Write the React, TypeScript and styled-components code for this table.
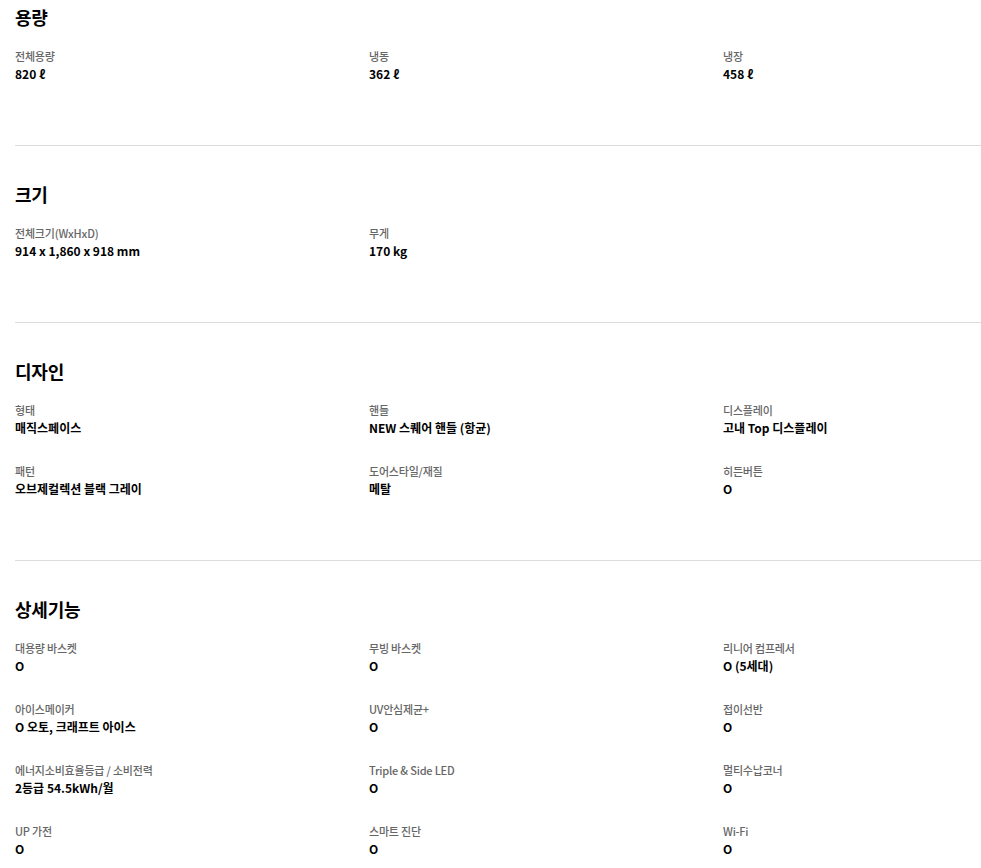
import React from 'react';
import styled, { createGlobalStyle } from 'styled-components';

const GlobalStyle = createGlobalStyle`
  body {
    margin: 0;
    background: #fff;
    font-family: "Noto Sans CJK KR", "Noto Sans", sans-serif;
    color: #000;
  }
`;

interface Spec {
  label: string;
  value: string;
}

interface SpecGroup {
  title: string;
  items: Spec[];
}

const groups: SpecGroup[] = [
  {
    title: '용량',
    items: [
      { label: '전체용량', value: '820 ℓ' },
      { label: '냉동', value: '362 ℓ' },
      { label: '냉장', value: '458 ℓ' },
    ],
  },
  {
    title: '크기',
    items: [
      { label: '전체크기(WxHxD)', value: '914 x 1,860 x 918 mm' },
      { label: '무게', value: '170 kg' },
    ],
  },
  {
    title: '디자인',
    items: [
      { label: '형태', value: '매직스페이스' },
      { label: '핸들', value: 'NEW 스퀘어 핸들 (항균)' },
      { label: '디스플레이', value: '고내 Top 디스플레이' },
      { label: '패턴', value: '오브제컬렉션 블랙 그레이' },
      { label: '도어스타일/재질', value: '메탈' },
      { label: '히든버튼', value: 'O' },
    ],
  },
  {
    title: '상세기능',
    items: [
      { label: '대용량 바스켓', value: 'O' },
      { label: '무빙 바스켓', value: 'O' },
      { label: '리니어 컴프레서', value: 'O (5세대)' },
      { label: '아이스메이커', value: 'O 오토, 크래프트 아이스' },
      { label: 'UV안심제균+', value: 'O' },
      { label: '접이선반', value: 'O' },
      { label: '에너지소비효율등급 / 소비전력', value: '2등급 54.5kWh/월' },
      { label: 'Triple & Side LED', value: 'O' },
      { label: '멀티수납코너', value: 'O' },
      { label: 'UP 가전', value: 'O' },
      { label: '스마트 진단', value: 'O' },
      { label: 'Wi-Fi', value: 'O' },
    ],
  },
];

const Page = styled.div`
  padding-left: 15px;
  width: 966px;
`;

const Section = styled.section`
  padding: 34px 0 62px;
  border-bottom: 1px solid #dddddd;

  &:first-child {
    padding-top: 3px;
  }
`;

const Title = styled.h2`
  margin: 0 0 17px;
  font-size: 18px;
  line-height: 28px;
  font-weight: 700;
  letter-spacing: -0.2px;
`;

const Grid = styled.dl`
  margin: 0;
  display: grid;
  grid-template-columns: 354px 354px 1fr;
  row-gap: 26px;
`;

const Item = styled.div`
  display: flex;
  flex-direction: column;
  gap: 1px;
`;

const Label = styled.dt`
  font-size: 11px;
  line-height: 16px;
  font-weight: 500;
  color: #666666;
  letter-spacing: -0.2px;
`;

const Value = styled.dd`
  margin: 0;
  font-size: 12px;
  line-height: 18px;
  font-weight: 700;
  letter-spacing: 0;
`;

function App() {
  return (
    <>
      <GlobalStyle />
      <Page>
        {groups.map(group => (
          <Section key={group.title}>
            <Title>{group.title}</Title>
            <Grid>
              {group.items.map(item => (
                <Item key={item.label}>
                  <Label>{item.label}</Label>
                  <Value>{item.value}</Value>
                </Item>
              ))}
            </Grid>
          </Section>
        ))}
      </Page>
    </>
  );
}

export default App;
